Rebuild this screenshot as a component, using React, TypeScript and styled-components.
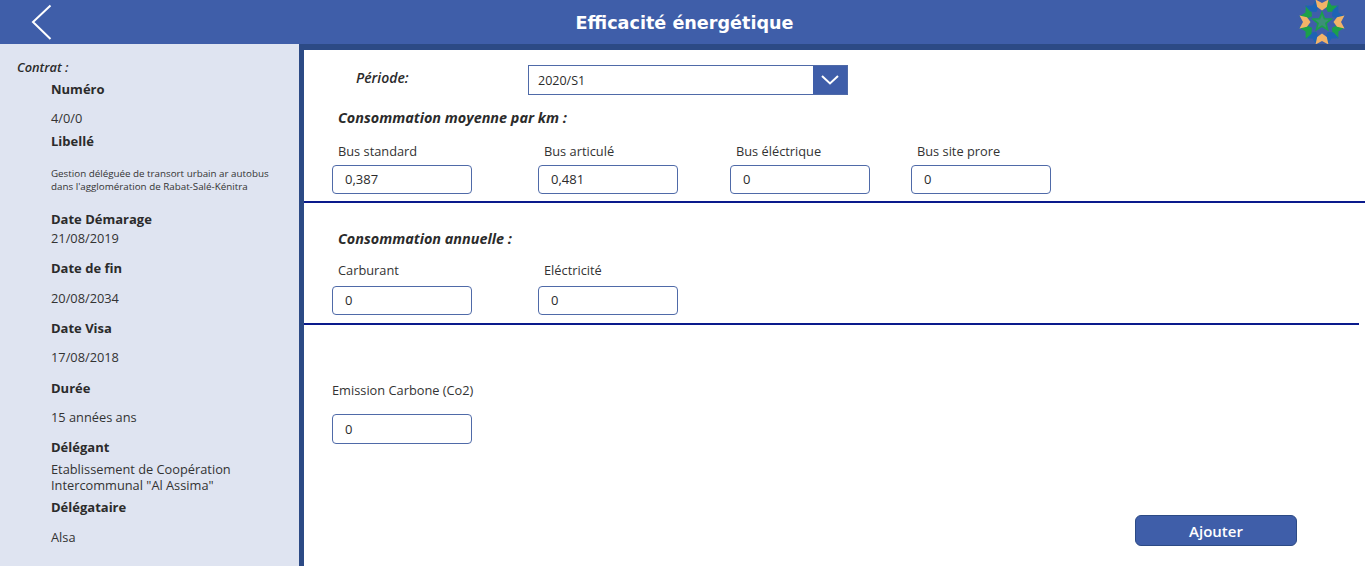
import styled, { createGlobalStyle } from 'styled-components';

const GlobalStyle = createGlobalStyle`
  html, body {
    margin: 0;
    padding: 0;
    background: #fff;
  }
  body {
    font-family: 'Open Sans', 'Liberation Sans', sans-serif;
    color: #2b2b2b;
  }
`;

type EntryProps = {
  label: string;
  value: string[];
  valueGap: number;
  after: number;
  small?: boolean;
};

function InfoEntry({ label, value, valueGap, after, small }: EntryProps) {
  return (
    <Entry $after={after}>
      <EntryLabel>{label}</EntryLabel>
      <EntryValue $gap={valueGap} $small={small}>
        {value.map((line) => (
          <div key={line}>{line}</div>
        ))}
      </EntryValue>
    </Entry>
  );
}

type FieldProps = {
  label: string;
  value: string;
  labelGap?: number;
  flush?: boolean;
  tall?: boolean;
};

function Field({ label, value, labelGap = 6, flush, tall }: FieldProps) {
  return (
    <FieldBox>
      <FieldLabel $gap={labelGap} $flush={flush}>
        {label}
      </FieldLabel>
      <Input $tall={tall}>{value}</Input>
    </FieldBox>
  );
}

// orange last so it sits on top of its neighbours
const petals = [
  { angle: 30, color: '#1ba04a' },
  { angle: 60, color: '#1e63b4' },
  { angle: 120, color: '#1ba04a' },
  { angle: 150, color: '#1e63b4' },
  { angle: 210, color: '#1e63b4' },
  { angle: 240, color: '#1ba04a' },
  { angle: 300, color: '#1ba04a' },
  { angle: 330, color: '#1e63b4' },
  { angle: 0, color: '#f2b368' },
  { angle: 90, color: '#f2b368' },
  { angle: 180, color: '#f2b368' },
  { angle: 270, color: '#f2b368' },
];

function Logo() {
  return (
    <svg width="46" height="44" viewBox="-23 -22 46 44">
      {petals.map((p) => (
        <path
          key={p.angle}
          transform={`rotate(${p.angle})`}
          d="M-6.5 -22.5 L0 -19 L6.5 -22.5 L4.8 -15 L0 -11.5 L-4.8 -15 Z"
          fill={p.color}
        />
      ))}
      <path
        d="M0 -9.5 L2.4 -3.2 L9 -2.9 L3.9 1.3 L5.6 7.7 L0 4.1 L-5.6 7.7 L-3.9 1.3 L-9 -2.9 L-2.4 -3.2 Z"
        fill="#3d8f78"
        stroke="#1ba04a"
        strokeWidth="1.6"
      />
    </svg>
  );
}

export default function App() {
  return (
    <>
      <GlobalStyle />
      <Page>
        <Header>
          <BackButton>
            <svg width="22" height="36" viewBox="0 0 22 36" fill="none">
              <path d="M19.5 1.5 L2 18 L19.5 35" stroke="#fff" strokeWidth="2" />
            </svg>
          </BackButton>
          <Title>Efficacité énergétique</Title>
          <LogoSlot>
            <Logo />
          </LogoSlot>
        </Header>
        <Body>
          <Sidebar>
            <SideTitle>Contrat :</SideTitle>
            <InfoEntry label="Numéro" value={['4/0/0']} valueGap={11} after={5} />
            <InfoEntry
              label="Libellé"
              value={['Gestion déléguée de transort urbain ar autobus', "dans l'agglomération de Rabat-Salé-Kénitra"]}
              valueGap={16}
              after={16}
              small
            />
            <InfoEntry label="Date Démarage" value={['21/08/2019']} valueGap={1} after={12} />
            <InfoEntry label="Date de fin" value={['20/08/2034']} valueGap={12} after={12} />
            <InfoEntry label="Date Visa" value={['17/08/2018']} valueGap={11} after={13} />
            <InfoEntry label="Durée" value={['15 années ans']} valueGap={11} after={12} />
            <InfoEntry
              label="Délégant"
              value={['Etablissement de Coopération', 'Intercommunal "Al Assima"']}
              valueGap={4}
              after={4}
            />
            <InfoEntry label="Délégataire" value={['Alsa']} valueGap={12} after={0} />
          </Sidebar>
          <Main>
            <PeriodRow>
              <PeriodLabel>Période:</PeriodLabel>
              <Select>
                <SelectValue>2020/S1</SelectValue>
                <SelectArrow>
                  <svg width="18" height="10" viewBox="0 0 18 10" fill="none">
                    <path d="M1 1 L9 8.5 L17 1" stroke="#fff" strokeWidth="2" />
                  </svg>
                </SelectArrow>
              </Select>
            </PeriodRow>
            <SectionTitle $top={12}>Consommation moyenne par km :</SectionTitle>
            <FieldRow $top={14}>
              <Field label="Bus standard" value="0,387" />
              <Gap $w={66} />
              <Field label="Bus articulé" value="0,481" />
              <Gap $w={52} />
              <Field label="Bus éléctrique" value="0" />
              <Gap $w={41} />
              <Field label="Bus site prore" value="0" />
            </FieldRow>
            <Divider $top={7} />
            <SectionTitle $top={25}>Consommation annuelle :</SectionTitle>
            <FieldRow $top={12}>
              <Field label="Carburant" value="0" labelGap={8} />
              <Gap $w={66} />
              <Field label="Eléctricité" value="0" labelGap={8} />
            </FieldRow>
            <Divider $top={8} $inset={6} />
            <FieldRow $top={57}>
              <Field label="Emission Carbone (Co2)" value="0" labelGap={16} flush tall />
            </FieldRow>
            <Actions>
              <AddButton>Ajouter</AddButton>
            </Actions>
          </Main>
        </Body>
      </Page>
    </>
  );
}

// style
const Page = styled.div`
  width: 1365px;
  height: 566px;
  overflow: hidden;
  display: flex;
  flex-direction: column;
`;

const Header = styled.header`
  height: 44px;
  background-color: #3f5ea9;
  display: grid;
  grid-template-columns: 1fr auto 1fr;
  align-items: center;
`;

const BackButton = styled.div`
  display: flex;
  align-items: center;
  padding-left: 31px;
  height: 44px;
`;

const Title = styled.h1`
  margin: 0;
  padding: 1px 0 0 4px;
  font-family: 'DejaVu Sans', Verdana, sans-serif;
  font-size: 17.6px;
  font-weight: 700;
  color: #fff;
`;

const LogoSlot = styled.div`
  display: flex;
  justify-content: flex-end;
  padding-right: 20px;
  height: 44px;
`;

const Body = styled.div`
  flex: 1;
  display: flex;
  min-height: 0;
`;

const Sidebar = styled.aside`
  width: 299px;
  flex-shrink: 0;
  box-sizing: border-box;
  padding: 14px 0 0 51px;
  background-color: #dfe4f1;
`;

const SideTitle = styled.div`
  margin: 0 0 3px -34px;
  font-size: 12.8px;
  font-style: italic;
  font-weight: 600;
  line-height: 18px;
`;

const Entry = styled.div<{ $after: number }>`
  margin-bottom: ${({ $after }) => $after}px;
`;

const EntryLabel = styled.div`
  font-size: 13px;
  font-weight: 700;
  line-height: 20px;
`;

const EntryValue = styled.div<{ $gap: number; $small?: boolean }>`
  margin-top: ${({ $gap }) => $gap}px;
  font-size: ${({ $small }) => ($small ? '9.8px' : '12.8px')};
  line-height: ${({ $small }) => ($small ? '13px' : '16px')};
  color: #333;
`;

const Main = styled.main`
  flex: 1;
  min-width: 0;
  border-left: 5px solid #2c4a85;
  border-top: 6px solid #2c4a85;
  background: #fff;
`;

const PeriodRow = styled.div`
  display: flex;
  align-items: flex-start;
  margin-top: 15px;
  padding-left: 52px;
`;

const PeriodLabel = styled.div`
  width: 172px;
  font-size: 14px;
  font-style: italic;
  font-weight: 600;
  line-height: 26px;
`;

const Select = styled.div`
  width: 320px;
  height: 30px;
  box-sizing: border-box;
  border: 1px solid #4f6aa8;
  display: flex;
  align-items: stretch;
`;

const SelectValue = styled.div`
  flex: 1;
  padding-left: 9px;
  font-size: 12.5px;
  line-height: 30px;
`;

const SelectArrow = styled.div`
  width: 34px;
  background-color: #3f5ea9;
  display: flex;
  align-items: center;
  justify-content: center;
`;

const SectionTitle = styled.h2<{ $top: number }>`
  margin: ${({ $top }) => $top}px 0 0 34px;
  font-size: 14.4px;
  font-style: italic;
  font-weight: 700;
  line-height: 22px;
`;

const FieldRow = styled.div<{ $top: number }>`
  display: flex;
  margin-top: ${({ $top }) => $top}px;
  padding-left: 28px;
`;

const Gap = styled.div<{ $w: number }>`
  width: ${({ $w }) => $w}px;
`;

const FieldBox = styled.div`
  width: 140px;
  display: flex;
  flex-direction: column;
`;

const FieldLabel = styled.label<{ $gap: number; $flush?: boolean }>`
  margin-left: ${({ $flush }) => ($flush ? 0 : 6)}px;
  margin-bottom: ${({ $gap }) => $gap}px;
  font-size: 12.8px;
  line-height: 16px;
  white-space: nowrap;
  color: #333;
`;

const Input = styled.div<{ $tall?: boolean }>`
  height: ${({ $tall }) => ($tall ? 30 : 29)}px;
  box-sizing: border-box;
  padding-left: 12px;
  border: 1px solid #4f6aa8;
  border-radius: 4px;
  font-size: 13px;
  line-height: ${({ $tall }) => ($tall ? 28 : 27)}px;
`;

const Divider = styled.div<{ $top: number; $inset?: number }>`
  height: 2px;
  margin-top: ${({ $top }) => $top}px;
  margin-right: ${({ $inset }) => $inset ?? 0}px;
  background-color: #0a1a8c;
`;

const Actions = styled.div`
  display: flex;
  justify-content: flex-end;
  margin-top: 71px;
  padding-right: 68px;
`;

const AddButton = styled.button`
  width: 162px;
  height: 31px;
  box-sizing: border-box;
  border: 1px solid #2c4a85;
  border-radius: 6px;
  background-color: #3f5ea9;
  color: #fff;
  font-family: 'Open Sans', 'Liberation Sans', sans-serif;
  font-size: 15px;
  font-weight: 600;
`;
